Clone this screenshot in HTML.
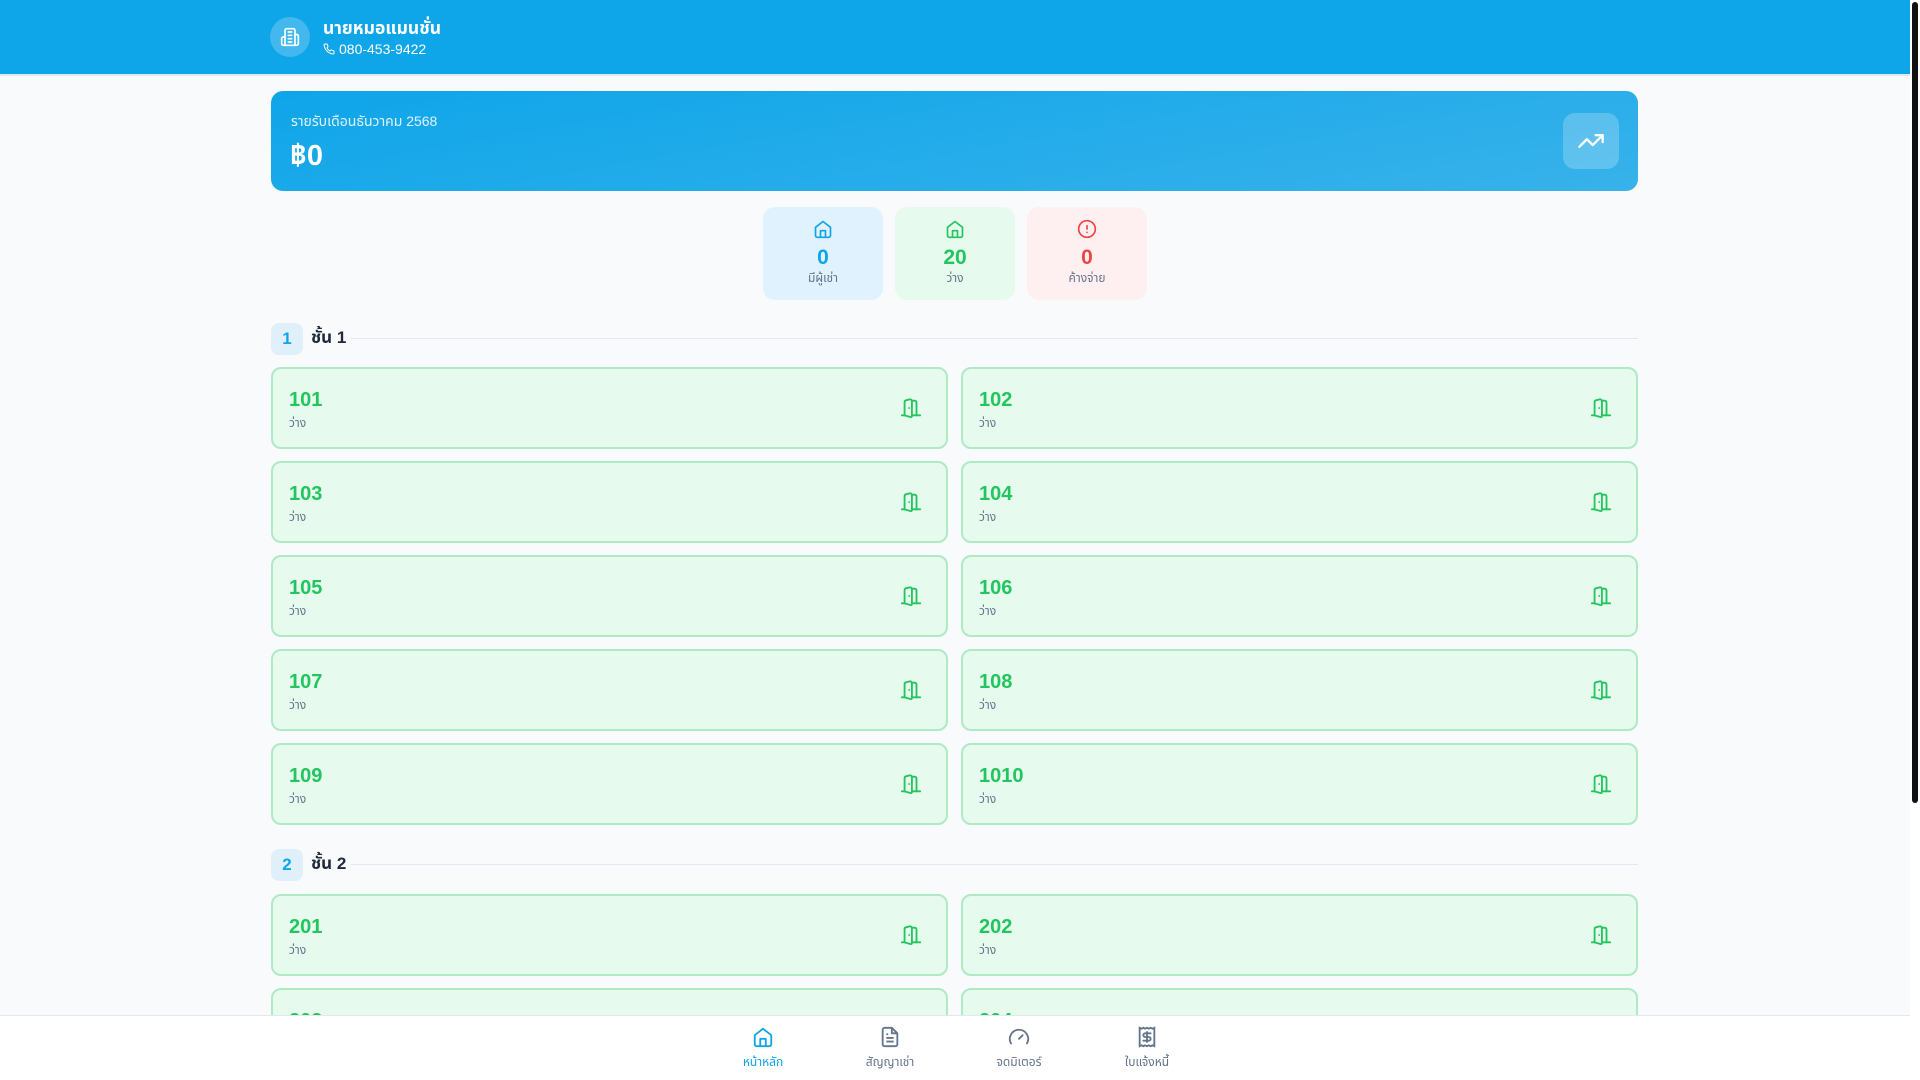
<!DOCTYPE html>
<html><head><meta charset="utf-8"><style>
*{box-sizing:border-box;margin:0;padding:0}
body{width:1920px;height:1080px;overflow:hidden;background:#f8fafc;font-family:"Liberation Sans","Noto Sans Thai","Noto Sans Thai UI","Noto Sans CJK SC",sans-serif;position:relative}
.abs{position:absolute}
.hdr{left:0;top:0;width:1910px;height:76px;background:#0ea5e9;border-bottom:2px solid #e2e8f0}
.sb{left:1910px;top:0;width:10px;height:1080px;background:#fff}
.thumb{left:1912px;top:2px;width:6px;height:801px;background:#111;border-radius:3px}
.inc{left:271px;top:91px;width:1367px;height:100px;border-radius:12px;background:linear-gradient(170deg,#0ea5e9,#38b2ea)}
.stat{top:207px;width:120px;height:93px;border-radius:12px;text-align:center}
.stat .n{position:absolute;left:0;right:0;top:39px;font-size:21px;font-weight:bold}
.stat .l{position:absolute;left:0;right:0;top:63px;font-size:12px;color:#64748b}
.stat svg{position:absolute;left:50px;top:12px}
.badge{left:271px;width:32px;height:32px;border-radius:8px;background:#dff0fb;color:#0ea5e9;font-weight:bold;font-size:17px;text-align:center;line-height:32px}
.ft{left:311px;font-size:17px;font-weight:bold;color:#1e293b}
.line{left:351px;width:1287px;height:1px;background:#e2e8f0}
.room{width:677px;height:82px;border:2px solid #aeeac4;border-radius:10px;background:#e6faee}
.room .n{position:absolute;left:16px;top:20px;font-size:20px;font-weight:bold;color:#22c55e}
.room .l{position:absolute;left:16px;top:46px;font-size:12px;color:#64748b}
.room svg{position:absolute;left:627px;top:28px}
.nav{left:0;top:1015px;width:1910px;height:65px;background:#fff;border-top:1px solid #e2e8f0}
.ni{top:1026px;width:120px;text-align:center;font-size:12px;color:#64748b}
.ni svg{display:block;margin:0 auto 6px}
</style></head><body>
<div class="abs hdr"></div>
<div class="abs" style="left:270px;top:17px;width:40px;height:40px;border-radius:50%;background:rgba(255,255,255,.22)"></div>
<svg class="abs" style="left:280px;top:27px" width="20" height="20" viewBox="0 0 24 24" fill="none" stroke="#fff" stroke-width="2" stroke-linecap="round" stroke-linejoin="round"><path d="M6 22V4a2 2 0 0 1 2-2h8a2 2 0 0 1 2 2v18Z"/><path d="M6 12H4a2 2 0 0 0-2 2v6a2 2 0 0 0 2 2h2"/><path d="M18 9h2a2 2 0 0 1 2 2v9a2 2 0 0 1-2 2h-2"/><path d="M10 6h4M10 10h4M10 14h4M10 18h4"/></svg>
<div class="abs" style="left:323px;top:15px;font-size:17.5px;font-weight:bold;color:#fff">นายหมอแมนชั่น</div>
<svg class="abs" style="left:323px;top:43px" width="12" height="12" viewBox="0 0 24 24" fill="none" stroke="#fff" stroke-width="2"><path d="M22 16.9v3a2 2 0 0 1-2.2 2 19.8 19.8 0 0 1-8.6-3.1 19.5 19.5 0 0 1-6-6A19.8 19.8 0 0 1 2.1 4.2 2 2 0 0 1 4.1 2h3a2 2 0 0 1 2 1.7c.1 1 .4 1.9.7 2.8a2 2 0 0 1-.5 2.1L8 9.9a16 16 0 0 0 6 6l1.3-1.3a2 2 0 0 1 2.1-.4c.9.3 1.8.6 2.8.7a2 2 0 0 1 1.7 2Z"/></svg>
<div class="abs" style="left:339px;top:41px;font-size:14px;color:#fff">080-453-9422</div>
<div class="abs sb"></div><div class="abs thumb"></div>

<div class="abs inc"></div>
<div class="abs" style="left:291px;top:112px;font-size:14px;color:#e0f2fe">รายรับเดือนธันวาคม 2568</div>
<div class="abs" style="left:290px;top:135px;font-size:29px;font-weight:bold;color:#fff">฿0</div>
<div class="abs" style="left:1563px;top:113px;width:56px;height:56px;border-radius:12px;background:rgba(255,255,255,.22)"></div>
<svg class="abs" style="left:1577px;top:127px" width="28" height="28" viewBox="0 0 24 24" fill="none" stroke="#fff" stroke-width="2" stroke-linecap="round" stroke-linejoin="round"><path d="M22 7l-8.5 8.5-5-5L2 17"/><path d="M16 7h6v6"/></svg>

<div class="abs stat" style="left:763px;background:#e0f2fe"><svg width="20" height="20" viewBox="0 0 24 24" fill="none" stroke="#0ea5e9" stroke-width="2" stroke-linejoin="round"><path d="M3 10l9-7 9 7v10a2 2 0 0 1-2 2H5a2 2 0 0 1-2-2z"/><path d="M9 22v-8h6v8"/></svg><div class="n" style="color:#0ea5e9">0</div><div class="l">มีผู้เช่า</div></div>
<div class="abs stat" style="left:895px;background:#e6faee"><svg width="20" height="20" viewBox="0 0 24 24" fill="none" stroke="#22c55e" stroke-width="2" stroke-linejoin="round"><path d="M3 10l9-7 9 7v10a2 2 0 0 1-2 2H5a2 2 0 0 1-2-2z"/><path d="M9 22v-8h6v8"/></svg><div class="n" style="color:#22c55e">20</div><div class="l">ว่าง</div></div>
<div class="abs stat" style="left:1027px;background:#fef0f0"><svg width="20" height="20" viewBox="0 0 24 24" fill="none" stroke="#ef4444" stroke-width="2" stroke-linecap="round"><circle cx="12" cy="12" r="10"/><path d="M12 8v4M12 16h.01"/></svg><div class="n" style="color:#ef4444">0</div><div class="l">ค้างจ่าย</div></div>

<div class="abs badge" style="top:323px">1</div><div class="abs ft" style="top:325px">ชั้น 1</div><div class="abs line" style="top:338px"></div>
<div class="abs badge" style="top:849px">2</div><div class="abs ft" style="top:851px">ชั้น 2</div><div class="abs line" style="top:864px"></div>

<div id="rooms"></div>

<div class="abs nav"></div>
<div class="abs ni" style="left:703px;color:#0ea5e9"><svg width="22" height="22" viewBox="0 0 24 24" fill="none" stroke="#0ea5e9" stroke-width="2" stroke-linejoin="round"><path d="M3 10l9-7 9 7v10a2 2 0 0 1-2 2H5a2 2 0 0 1-2-2z"/><path d="M9 22v-8h6v8"/></svg>หน้าหลัก</div>
<div class="abs ni" style="left:830px"><svg width="22" height="22" viewBox="0 0 24 24" fill="none" stroke="#64748b" stroke-width="2" stroke-linejoin="round"><path d="M14 2H6a2 2 0 0 0-2 2v16a2 2 0 0 0 2 2h12a2 2 0 0 0 2-2V8z"/><path d="M14 2v6h6M8 13h8M8 17h8M8 9h2"/></svg>สัญญาเช่า</div>
<div class="abs ni" style="left:959px"><svg width="22" height="22" viewBox="0 0 24 24" fill="none" stroke="#64748b" stroke-width="2" stroke-linecap="round"><path d="M3.3 19a10 10 0 1 1 17.4 0"/><path d="M12 14l4-4"/></svg>จดมิเตอร์</div>
<div class="abs ni" style="left:1087px"><svg width="22" height="22" viewBox="0 0 24 24" fill="none" stroke="#64748b" stroke-width="2" stroke-linecap="round"><path d="M4 2v20l2-1 2 1 2-1 2 1 2-1 2 1 2-1 2 1V2l-2 1-2-1-2 1-2-1-2 1-2-1-2 1z"/><path d="M16 8h-6a2 2 0 1 0 0 4h4a2 2 0 1 1 0 4H8M12 17.5v-11"/></svg>ใบแจ้งหนี้</div>

<script>
var door='<svg width="22" height="22" viewBox="0 0 24 24" fill="none" stroke="#22c55e" stroke-width="2" stroke-linecap="round" stroke-linejoin="round"><path d="M13 4h3a2 2 0 0 1 2 2v14"/><path d="M2 20h3M13 20h9M10 12v.01"/><path d="M13 4.56v16.38a1 1 0 0 1-1.24.97L5 20V5.56a2 2 0 0 1 1.51-1.94l4-1A2 2 0 0 1 13 4.56z"/></svg>';
var h='',rows=[[1,367],[1,461],[1,555],[1,649],[1,743],[2,894],[2,988]],c=[0,0];
rows.forEach(function(r,i){var f=r[0];for(var k=0;k<2;k++){c[f-1]++;var n=''+f+'0'+c[f-1];if(c[f-1]==10)n=f+'010';
h+='<div class="abs room" style="left:'+(k?961:271)+'px;top:'+r[1]+'px"><div class="n">'+n+'</div><div class="l">ว่าง</div>'+door+'</div>';}});
document.getElementById('rooms').innerHTML=h;
</script>
</body></html>
